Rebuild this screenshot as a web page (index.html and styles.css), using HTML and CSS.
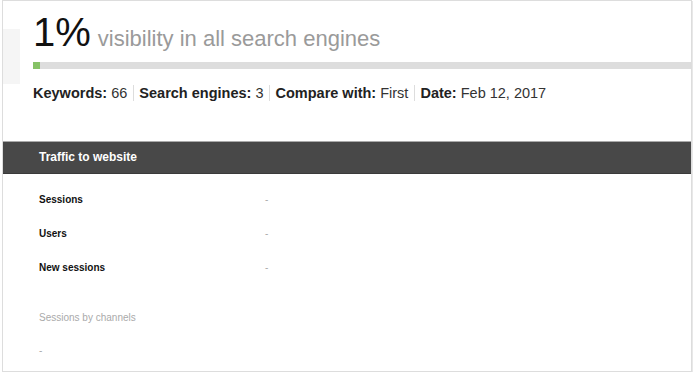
FILE: index.html
```html
<!DOCTYPE html>
<html lang="en">
<head>
<meta charset="UTF-8" />
<meta name="viewport" content="width=device-width, initial-scale=1" />
<title>Visibility report</title>
<link rel="stylesheet" href="styles.css">
</head>
<body>

<div class="card">
  <div class="summary">
    <div class="side-tab"></div>
    <div class="summary-body">
      <div class="headline">
        <span class="percent">1%</span><span class="caption">visibility in all search engines</span>
      </div>
      <div class="progress">
        <div class="progress-fill" style="width: 1%;"></div>
      </div>
      <div class="stats">
        <span class="stat"><b>Keywords:</b> 66</span>
        <span class="stat"><b>Search engines:</b> 3</span>
        <span class="stat"><b>Compare with:</b> First</span>
        <span class="stat"><b>Date:</b> Feb 12, 2017</span>
      </div>
    </div>
  </div>

  <div class="section-head">Traffic to website</div>

  <div class="metrics">
    <div class="metric">
      <div class="metric-name">Sessions</div>
      <div class="metric-value">-</div>
    </div>
    <div class="metric">
      <div class="metric-name">Users</div>
      <div class="metric-value">-</div>
    </div>
    <div class="metric">
      <div class="metric-name">New sessions</div>
      <div class="metric-value">-</div>
    </div>
  </div>

  <div class="channels">
    <div class="channels-title">Sessions by channels</div>
    <div class="channels-value">-</div>
  </div>
</div>

</body>
</html>
```

FILE: styles.css
```css
body {
  margin: 0;
  font-family: 'Liberation Sans', Arial, sans-serif;
  background-color: #fff;
  color: #222;
}
.card {
  margin-left: 2px;
  width: 690px;
  box-sizing: border-box;
  border: 1px solid #ddd;
  box-shadow: 1px 1px 0 #e8e8e8;
  padding-bottom: 13px;
}
.summary {
  display: flex;
  height: 140px;
}
.side-tab {
  width: 17px;
  height: 55px;
  margin-top: 28px;
  background-color: #f5f5f5;
}
.summary-body {
  flex: 1;
  padding-left: 13px;
  padding-top: 11px;
}
.headline {
  font-size: 40px;
  line-height: 40px;
  height: 40px;
  white-space: nowrap;
}
.percent {
  color: #111;
}
.caption {
  font-size: 22px;
  line-height: 1;
  color: #9a9a9a;
  margin-left: 7px;
}
.progress {
  margin-top: 10px;
  height: 7px;
  background-color: #ddd;
}
.progress-fill {
  height: 100%;
  min-width: 6px;
  background-color: #86c266;
}
.stats {
  margin-top: 15px;
  font-size: 14.5px;
  line-height: 18px;
  color: #333;
}
.stats b {
  color: #222;
}
.stat + .stat {
  border-left: 1px solid #ddd;
  padding-left: 5px;
  margin-left: 2px;
}
.section-head {
  border-top: 1px solid #aaa;
  border-bottom: 1px solid #3a3a3a;
  background-color: #484848;
  color: #fff;
  font-size: 12px;
  font-weight: bold;
  line-height: 31px;
  padding-left: 36px;
}
.metrics {
  padding: 9px 0 0 36px;
}
.metric {
  display: grid;
  grid-template-columns: 226px 1fr;
  height: 34px;
  line-height: 34px;
  font-size: 10px;
}
.metric-name {
  font-weight: bold;
  color: #111;
}
.metric-value {
  color: #aaa;
}
.channels {
  padding: 26px 0 0 36px;
  font-size: 10px;
  line-height: 14px;
  color: #aaa;
}
.channels-value {
  margin-top: 19px;
}
```
